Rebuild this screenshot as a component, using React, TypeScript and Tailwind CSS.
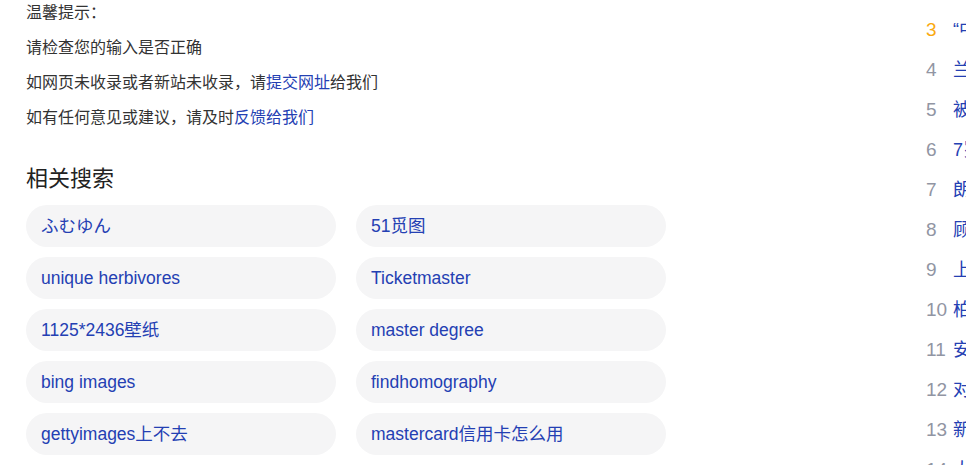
const related = [
  "ふむゆん",
  "51觅图",
  "unique herbivores",
  "Ticketmaster",
  "1125*2436壁纸",
  "master degree",
  "bing images",
  "findhomography",
  "gettyimages上不去",
  "mastercard信用卡怎么用",
]

const hot = [
  { idx: 3, title: "“中国式现代化”新篇章" },
  { idx: 4, title: "兰州一小区发生火灾" },
  { idx: 5, title: "被困电梯多人获救" },
  { idx: 6, title: "7岁男孩独自出门" },
  { idx: 7, title: "朗读者新一季开播" },
  { idx: 8, title: "顾客投诉商家被罚" },
  { idx: 9, title: "上海发布高温预警" },
  { idx: 10, title: "柏林国际电影节" },
  { idx: 11, title: "安徽暴雨最新消息" },
  { idx: 12, title: "对话航天员" },
  { idx: 13, title: "新能源汽车下乡" },
  { idx: 14, title: "大学生就业季" },
]

const font = "font-['Liberation_Sans','Noto_Sans_CJK_SC',sans-serif]"

export default function App() {
  return (
    <div className={`w-[966px] h-[465px] overflow-hidden bg-white flex ${font}`}>
      <div className="w-[926px] shrink-0 pl-[26px]">
        <div className="-mt-[5px] text-[16px] leading-[35px] text-[#333]">
          <p>温馨提示：</p>
          <p>请检查您的输入是否正确</p>
          <p>
            如网页未收录或者新站未收录，请<a className="text-[#2440b3]">提交网址</a>给我们
          </p>
          <p>
            如有任何意见或建议，请及时<a className="text-[#2440b3]">反馈给我们</a>
          </p>
        </div>

        <h3 className="mt-[29px] text-[22px] leading-[30px] text-[#222]">相关搜索</h3>

        <div className="mt-[11px] grid grid-cols-[310px_310px] gap-x-5 gap-y-[10px]">
          {related.map((r) => (
            <a
              key={r}
              className="h-[42px] rounded-full bg-[#f5f5f6] px-[15px] flex items-center text-[17.5px] text-[#2440b3] whitespace-nowrap"
            >
              {r}
            </a>
          ))}
        </div>
      </div>

      <div className="pt-[10px] shrink-0">
        {hot.map((h) => (
          <div key={h.idx} className="h-[40px] flex items-center whitespace-nowrap">
            <span
              className={`w-[27px] text-[19px] ${h.idx === 3 ? "text-[#faa90e]" : "text-[#9195a3]"}`}
            >
              {h.idx}
            </span>
            <span className="text-[18px] text-[#2440b3]">{h.title}</span>
          </div>
        ))}
      </div>
    </div>
  )
}
